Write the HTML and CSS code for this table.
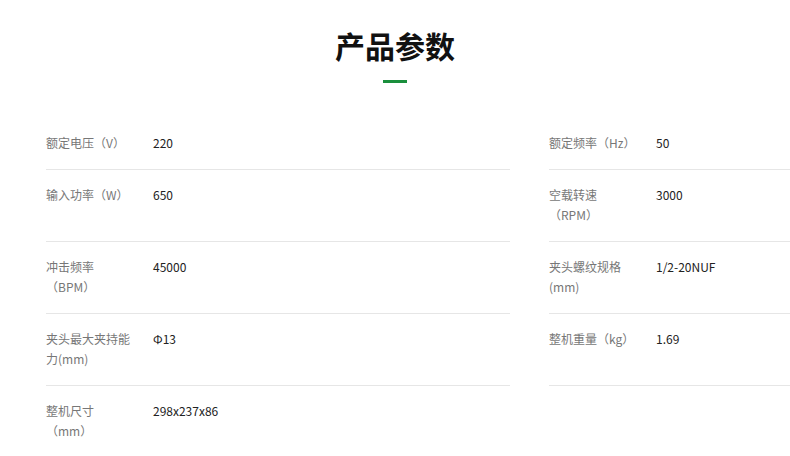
FILE: index.html
```html
<!DOCTYPE html>
<html lang="zh-CN">
<head>
<meta charset="utf-8">
<title>产品参数</title>
<link rel="stylesheet" href="styles.css">
</head>
<body>
<section class="params">
  <header class="params-head">
    <h2 class="params-title">产品参数</h2>
    <div class="params-bar"></div>
  </header>
  <div class="params-grid">
    <div class="cell"><div class="label">额定电压（V）</div><div class="value">220</div></div>
    <div class="cell"><div class="label">额定频率（Hz）</div><div class="value">50</div></div>
    <div class="cell"><div class="label">输入功率（W）</div><div class="value">650</div></div>
    <div class="cell"><div class="label">空载转速（RPM）</div><div class="value">3000</div></div>
    <div class="cell"><div class="label">冲击频率（BPM）</div><div class="value">45000</div></div>
    <div class="cell"><div class="label">夹头螺纹规格(mm)</div><div class="value">1/2-20NUF</div></div>
    <div class="cell"><div class="label">夹头最大夹持能力(mm)</div><div class="value">Φ13</div></div>
    <div class="cell"><div class="label">整机重量（kg）</div><div class="value">1.69</div></div>
    <div class="cell"><div class="label">整机尺寸（mm）</div><div class="value">298x237x86</div></div>
    <div class="cell empty"></div>
  </div>
</section>
</body>
</html>
```
FILE: styles.css
```css
html, body {
  margin: 0;
  padding: 0;
  background: #ffffff;
}
body {
  font-family: "Noto Sans CJK SC", "Noto Sans", sans-serif;
  width: 790px;
  overflow: hidden;
}
.params {
  padding-top: 25px;
}
.params-head {
  display: flex;
  flex-direction: column;
  align-items: center;
}
.params-title {
  margin: 0;
  font-size: 30px;
  line-height: 40px;
  font-weight: 700;
  color: #111111;
}
.params-bar {
  margin-top: 15px;
  width: 24px;
  height: 3px;
  background: #1a8f3c;
}
.params-grid {
  margin-top: 35px;
  padding-left: 46px;
  display: grid;
  grid-template-columns: 464px 1fr;
  column-gap: 39px;
}
.cell {
  display: flex;
  align-items: flex-start;
  padding: 15px 0 16px;
  border-bottom: 1px solid #e6e6e6;
  font-size: 12px;
  line-height: 20px;
}
.cell.empty {
  border-bottom-color: transparent;
}
.label {
  flex: 0 0 85px;
  margin-right: 22px;
  color: #777777;
}
.value {
  color: #222222;
}
```
